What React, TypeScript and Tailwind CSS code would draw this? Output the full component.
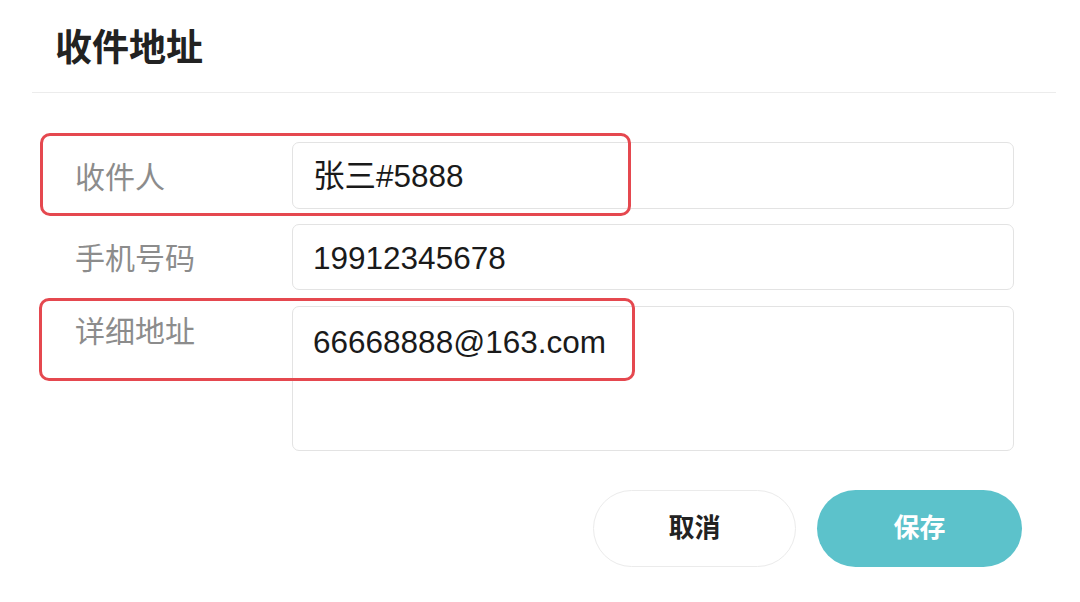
export default function App() {
  const font = { fontFamily: '"Liberation Sans", "Noto Sans CJK SC", sans-serif' };
  return (
    <div className="relative w-[1080px] h-[602px] bg-white overflow-hidden" style={font}>
      <div className="pl-[55px] pt-[30px]">
        <h1 className="text-[37px] leading-[37px] font-bold text-[#222]">收件地址</h1>
      </div>
      <div className="mt-[25px] ml-[32px] mr-[24px] h-[1px] bg-[#ececec]" />
      <div className="pl-[75px] pt-[49px] flex flex-col">
        <div className="flex items-center h-[67px]">
          <div className="w-[217px] text-[30px] text-[#8c8c8c] pt-[3px]">收件人</div>
          <div className="w-[722px] h-[67px] border border-[#e3e3e3] rounded-[7px] flex items-center pl-[20px] pt-[3px] text-[31.5px] text-[#1a1a1a]">张三#5888</div>
        </div>
        <div className="flex items-center h-[66px] mt-[15px]">
          <div className="w-[217px] text-[30px] text-[#8c8c8c] pt-[3px]">手机号码</div>
          <div className="w-[722px] h-[66px] border border-[#e3e3e3] rounded-[7px] flex items-center pl-[20px] pt-[3px] text-[31.5px] text-[#1a1a1a]">19912345678</div>
        </div>
        <div className="flex items-start mt-[16px]">
          <div className="w-[217px] text-[30px] leading-[40px] text-[#8c8c8c] pt-[6px]">详细地址</div>
          <div className="w-[722px] h-[145px] border border-[#e3e3e3] rounded-[7px] pl-[20px] pt-[15px] text-[31.5px] leading-[40px] text-[#1a1a1a]">66668888@163.com</div>
        </div>
        <div className="flex justify-end mt-[39px] pr-[58px] gap-[21px]">
          <button className="w-[203px] h-[77px] rounded-full border border-[#ebebeb] bg-white text-[26px] font-bold text-[#222]">取消</button>
          <button className="w-[205px] h-[77px] rounded-full bg-[#5cc2cb] text-[26px] font-bold text-white">保存</button>
        </div>
      </div>
      <div className="absolute left-[40px] top-[133px] w-[591px] h-[83px] border-[3px] border-[#e5484f] rounded-[10px]" />
      <div className="absolute left-[39px] top-[298px] w-[596px] h-[83px] border-[3px] border-[#e5484f] rounded-[10px]" />
    </div>
  );
}
